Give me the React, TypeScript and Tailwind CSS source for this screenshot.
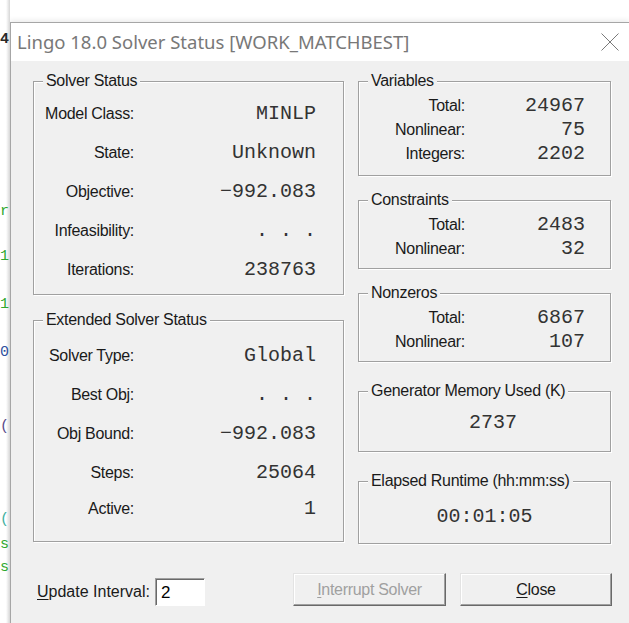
import React from "react";

const lbl = "font-['Liberation_Sans',Arial,sans-serif] text-[16px] tracking-[-0.3px] text-[#1a1a1a]";
const val = "font-['Liberation_Mono','Courier_New',monospace] text-[20px] leading-none text-[#333333]";

function Group({ title, className, children }: { title: string; className: string; children?: React.ReactNode }) {
  return (
    <div className={`relative border border-[#a0a0a0] shadow-[inset_1px_1px_0_#ffffff,1px_1px_0_#ffffff] ${className}`}>
      <span className={`absolute left-[9px] top-[-11px] bg-[#f0f0f0] px-[3px] leading-[20px] ${lbl}`}>{title}</span>
      {children}
    </div>
  );
}

function LRow({ label, value, h }: { label: string; value: string; h: string }) {
  return (
    <div className={`flex items-center ${h}`}>
      <div className={`w-[100px] text-right leading-[20px] ${lbl}`}>{label}</div>
      <div className={`flex-1 pr-[27px] text-right whitespace-pre ${val}`}>{value}</div>
    </div>
  );
}

function RRow({ label, value }: { label: string; value: string }) {
  return (
    <div className="flex h-6 items-center">
      <div className={`w-[106px] text-right leading-[20px] ${lbl}`}>{label}</div>
      <div className={`flex-1 pr-[25px] text-right ${val}`}>{value}</div>
    </div>
  );
}

const bg = [
  { ch: "4", top: 32, c: "text-[#2a2a2a] font-bold" },
  { ch: "r", top: 204, c: "text-[#2ea82e]" },
  { ch: "1", top: 249, c: "text-[#2ea82e]" },
  { ch: "1", top: 297, c: "text-[#2ea82e]" },
  { ch: "0", top: 345, c: "text-[#2f4f9f]" },
  { ch: "(", top: 419, c: "text-[#5a4a8a]" },
  { ch: "(", top: 512, c: "text-[#3fb0a0]" },
  { ch: "s", top: 537, c: "text-[#2ea82e]" },
  { ch: "s", top: 560, c: "text-[#2ea82e]" },
];

export default function App() {
  return (
    <div className="flex h-[623px] w-[629px] overflow-hidden bg-white">
      <div className="relative h-full w-[10px] shrink-0 overflow-hidden bg-linear-to-r from-white from-60% to-[#d6d6d6]">
        {bg.map((b, i) => (
          <span
            key={i}
            className={`absolute left-0 font-['Liberation_Mono',monospace] text-[15px] leading-[16px] ${b.c}`}
            style={{ top: b.top }}
          >
            {b.ch}
          </span>
        ))}
      </div>
      <div className="mt-[22px] flex flex-1 flex-col border-l border-t border-[#a6a6a6] shadow-[0_-2px_5px_rgba(0,0,0,0.08)]">
        <div className="flex h-[38px] shrink-0 items-center bg-white pl-[6px] pr-[10px]">
          <span className="font-['Noto_Sans',sans-serif] text-[18.5px] text-[#787878]">
            Lingo 18.0 Solver Status [WORK_MATCHBEST]
          </span>
          <svg className="ml-auto" width="18" height="18" viewBox="0 0 18 18">
            <path d="M0.5 0.5 L17.5 17.5 M17.5 0.5 L0.5 17.5" stroke="#7a7a7a" strokeWidth="1" fill="none" />
          </svg>
        </div>
        <div className="flex flex-1 flex-col bg-[#f0f0f0] pl-[22px] pr-[18px] pt-[20px]">
          <div className="flex items-start gap-[14px]">
            <div className="flex w-[311px] flex-col gap-[25px]">
              <Group title="Solver Status" className="h-[214px] pt-[12px]">
                <LRow label="Model Class:" value="MINLP" h="h-[39px]" />
                <LRow label="State:" value="Unknown" h="h-[39px]" />
                <LRow label="Objective:" value="−992.083" h="h-[39px]" />
                <LRow label="Infeasibility:" value=". . ." h="h-[39px]" />
                <LRow label="Iterations:" value="238763" h="h-[39px]" />
              </Group>
              <Group title="Extended Solver Status" className="h-[222px] pt-[15px]">
                <LRow label="Solver Type:" value="Global" h="h-[39px]" />
                <LRow label="Best Obj:" value=". . ." h="h-[39px]" />
                <LRow label="Obj Bound:" value="−992.083" h="h-[39px]" />
                <LRow label="Steps:" value="25064" h="h-[39px]" />
                <LRow label="Active:" value="1" h="h-[33px]" />
              </Group>
            </div>
            <div className="flex w-[253px] flex-col">
              <Group title="Variables" className="h-[95px] pt-[12px]">
                <RRow label="Total:" value="24967" />
                <RRow label="Nonlinear:" value="75" />
                <RRow label="Integers:" value="2202" />
              </Group>
              <Group title="Constraints" className="mt-[24px] h-[69px] pt-[12px]">
                <RRow label="Total:" value="2483" />
                <RRow label="Nonlinear:" value="32" />
              </Group>
              <Group title="Nonzeros" className="mt-[24px] h-[69px] pt-[12px]">
                <RRow label="Total:" value="6867" />
                <RRow label="Nonlinear:" value="107" />
              </Group>
              <Group title="Generator Memory Used (K)" className="mt-[29px] h-[61px] pt-[19px]">
                <div className={`flex h-6 items-center justify-center pl-[17px] ${val}`}>2737</div>
              </Group>
              <Group title="Elapsed Runtime (hh:mm:ss)" className="mt-[29px] h-[63px] pt-[23px]">
                <div className={`flex h-6 items-center justify-center ${val}`}>00:01:05</div>
              </Group>
            </div>
          </div>
          <div className="mt-[29px] flex items-start">
            <div className="ml-[4px] mt-[5px] flex items-center">
              <span className="font-['Liberation_Sans',Arial,sans-serif] text-[16px] leading-[20px] text-[#1a1a1a]">
                <span className="underline underline-offset-2">U</span>pdate Interval:
              </span>
              <div className="ml-[5px] flex h-[28px] w-[50px] items-center border border-t-[#a0a0a0] border-l-[#a0a0a0] border-r-white border-b-white bg-white pl-[5px] shadow-[inset_1px_1px_0_#696969]">
                <span className="font-['Liberation_Sans',Arial,sans-serif] text-[17px] leading-none text-black">2</span>
              </div>
            </div>
            <div className="-mr-[1px] ml-auto flex gap-[14px]">
              <div className="flex h-[33px] w-[153px] items-center justify-center border border-t-[#e3e3e3] border-l-[#e3e3e3] border-r-[#696969] border-b-[#696969] bg-[#f0f0f0] shadow-[inset_-1px_-1px_0_#a0a0a0,inset_1px_1px_0_#ffffff]">
                <span className="font-['Liberation_Sans',Arial,sans-serif] text-[16px] tracking-[-0.3px] text-[#a0a0a0]">
                  <span className="underline underline-offset-2">I</span>nterrupt Solver
                </span>
              </div>
              <div className="flex h-[33px] w-[152px] items-center justify-center border border-t-[#e3e3e3] border-l-[#e3e3e3] border-r-[#696969] border-b-[#696969] bg-[#f0f0f0] shadow-[inset_-1px_-1px_0_#a0a0a0,inset_1px_1px_0_#ffffff]">
                <span className={lbl}>
                  <span className="underline underline-offset-2">C</span>lose
                </span>
              </div>
            </div>
          </div>
        </div>
      </div>
    </div>
  );
}
